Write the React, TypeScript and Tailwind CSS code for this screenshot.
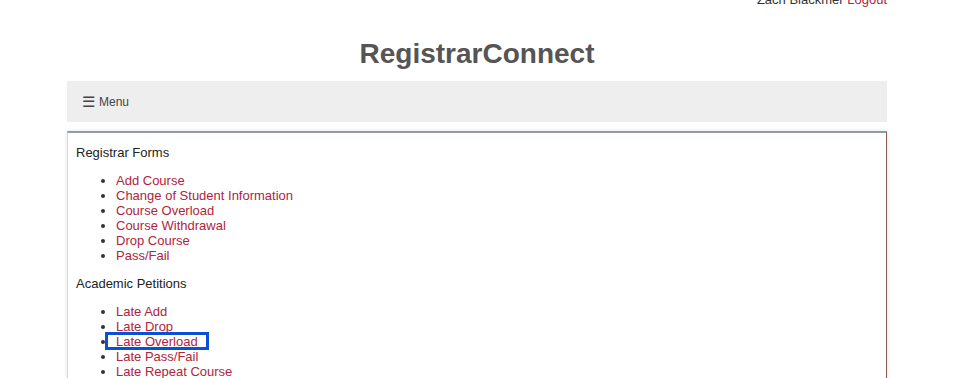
import React from 'react'

// Registrar portal landing page: user bar, title, menu strip, forms card

const registrarForms = [
  'Add Course',
  'Change of Student Information',
  'Course Overload',
  'Course Withdrawal',
  'Drop Course',
  'Pass/Fail',
]

const academicPetitions = [
  'Late Add',
  'Late Drop',
  'Late Overload',
  'Late Pass/Fail',
  'Late Repeat Course',
]

const font = { fontFamily: 'Tahoma, "Liberation Sans", Arial, sans-serif' }

function LinkList({ items, marked }: { items: string[]; marked?: string }) {
  return (
    <ul className="list-disc pl-10 mb-[13px]">
      {items.map((item) => (
        <li key={item} className="relative leading-[15px]">
          <a href="#" className="text-[#b0243c]">
            {item}
          </a>
          {item === marked && (
            <span className="absolute left-[-11px] top-[-2px] w-[104px] h-[18px] border-[3px] border-[#0b4fd8]" />
          )}
        </li>
      ))}
    </ul>
  )
}

export default function App() {
  return (
    <div className="h-[378px] overflow-hidden bg-white text-[#333] text-[13px]" style={font}>
      <div className="w-[820px] ml-[67px]">
        <div className="-mt-[9px] h-[18px] text-right leading-[18px] text-[13px]">
          <span className="text-[#333]">Zach Blackmer</span>{' '}
          <a href="#" className="text-[#b0243c]">Logout</a>
        </div>

        <h1 className="text-center font-bold text-[28px] text-[#555] leading-[34px] mt-[28px] mb-[10px]">
          RegistrarConnect
        </h1>

        <div className="h-[41px] bg-[#eeeeee] flex items-center px-[15px] text-[12px] text-[#444]">
          <span className="text-[15px] leading-none mr-[4px]">☰</span>
          <span>Menu</span>
        </div>

        <div className="mt-[9px] border-t-2 border-t-[#8e9ab0] border-r border-r-[#8a5c50] border-l border-l-[#d8d8d8] shadow-[0_0_4px_rgba(0,0,0,0.12)] pl-[8px] pt-[12px] h-[300px]">
          <p className="leading-[15px] mb-[13px] text-[#222]">Registrar Forms</p>
          <LinkList items={registrarForms} />
          <p className="leading-[15px] mb-[13px] text-[#222]">Academic Petitions</p>
          <LinkList items={academicPetitions} marked="Late Overload" />
        </div>
      </div>
    </div>
  )
}
